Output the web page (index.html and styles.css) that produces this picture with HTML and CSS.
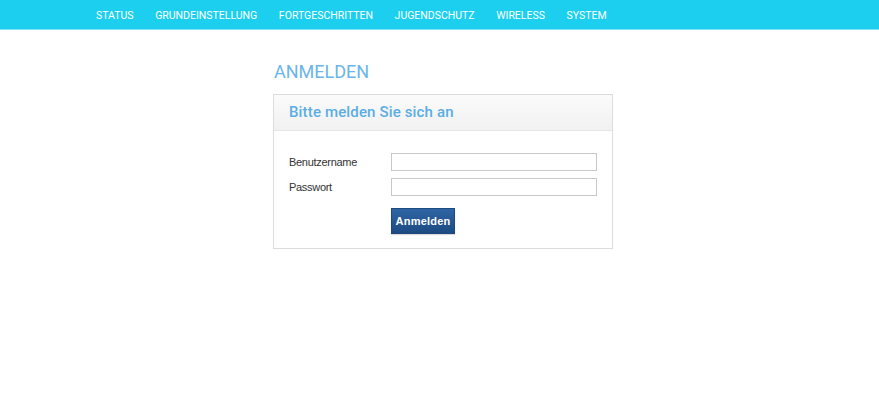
FILE: index.html
```html
<!DOCTYPE html>
<html lang="de">
<head>
<meta charset="utf-8">
<title>Anmelden</title>
<link rel="stylesheet" href="styles.css">
</head>
<body>
<nav class="topnav">
  <a class="nav-item" href="#">STATUS</a>
  <a class="nav-item" href="#">GRUNDEINSTELLUNG</a>
  <a class="nav-item" href="#">FORTGESCHRITTEN</a>
  <a class="nav-item" href="#">JUGENDSCHUTZ</a>
  <a class="nav-item" href="#">WIRELESS</a>
  <a class="nav-item" href="#">SYSTEM</a>
</nav>
<main class="content">
  <h1 class="page-title">ANMELDEN</h1>
  <section class="login-box">
    <div class="login-head">Bitte melden Sie sich an</div>
    <form class="login-form">
      <div class="row">
        <label class="label" for="user">Benutzername</label>
        <input class="field" id="user" type="text">
      </div>
      <div class="row">
        <label class="label" for="pass">Passwort</label>
        <input class="field" id="pass" type="password">
      </div>
      <div class="row actions">
        <button class="btn" type="button">Anmelden</button>
      </div>
    </form>
  </section>
</main>
</body>
</html>
```
FILE: styles.css
```css
html, body {
  margin: 0;
  padding: 0;
  background: #fff;
}
body {
  font-family: "Liberation Sans", Arial, sans-serif;
}
.topnav {
  height: 30px;
  background: #1ccfef;
  border-bottom: 1px solid #7fe3f6;
  display: flex;
  align-items: center;
  gap: 21.6px;
  padding-left: 96px;
  box-sizing: border-box;
}
.nav-item {
  color: #fff;
  text-decoration: none;
  font-family: Roboto, "Open Sans", sans-serif;
  font-size: 10.5px;
  letter-spacing: 0;
  padding-top: 2px;
}
.content {
  width: 340px;
  margin-left: 273px;
}
.page-title {
  margin: 31px 0 0 1px;
  font-family: Roboto, "Open Sans", sans-serif;
  font-weight: 400;
  font-size: 18px;
  line-height: 22px;
  color: #6ab6e8;
  letter-spacing: 0;
}
.login-box {
  margin-top: 11px;
  border: 1px solid #dcdcdc;
  height: 155px;
  box-sizing: border-box;
}
.login-head {
  height: 36px;
  background: linear-gradient(#fbfbfb, #f1f1f1);
  border-bottom: 1px solid #e6e6e6;
  box-sizing: border-box;
  padding: 8px 0 0 15px;
  font-family: Roboto, "Open Sans", sans-serif;
  font-weight: 500;
  font-size: 15px;
  color: #5aaee3;
  letter-spacing: 0.15px;
}
.login-form {
  padding: 22px 15px 0 15px;
  display: flex;
  flex-direction: column;
  gap: 7px;
}
.row {
  display: flex;
  align-items: center;
}
.label {
  width: 102px;
  font-size: 11px;
  letter-spacing: -0.3px;
  color: #333;
}
.field {
  width: 206px;
  height: 18px;
  box-sizing: border-box;
  border: 1px solid #c8c8c8;
  margin: 0;
  padding: 1px 3px;
  font-size: 12px;
}
.actions {
  padding-left: 102px;
  padding-top: 5px;
}
.btn {
  width: 64px;
  height: 26px;
  border: 1px solid #1f4a7e;
  background: linear-gradient(#2e65a5, #1d4a82);
  color: #fff;
  font-family: "Liberation Sans", Arial, sans-serif;
  font-weight: bold;
  font-size: 11px;
  letter-spacing: 0.2px;
  padding: 0;
  margin: 0;
  border-radius: 0;
  box-shadow: 0 1px 1px rgba(0,0,0,0.15);
}
```
